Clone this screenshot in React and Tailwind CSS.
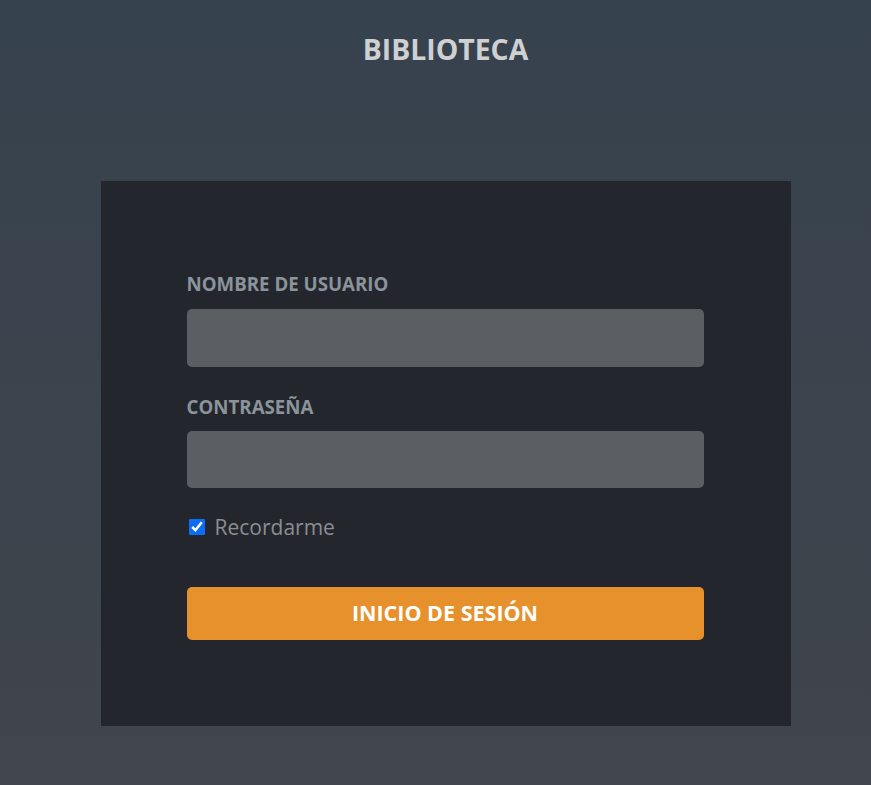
export default function App() {
  return (
    <div
      className="min-h-[785px] w-full bg-gradient-to-b from-[#36424e] to-[#41454c] flex flex-col items-center pl-[20px]"
      style={{ fontFamily: '"Open Sans", sans-serif' }}
    >
      <h1 className="mt-[30px] text-[28.4px] leading-[38px] font-bold text-[#cfd0d2]">
        BIBLIOTECA
      </h1>
      <div className="mt-[113px] w-[690px] h-[545px] bg-[#23272d] pt-[91px] pl-[86px] pr-[87px]">
        <label className="block text-[18.7px] leading-[24px] font-bold text-[#8b939b]">
          NOMBRE DE USUARIO
        </label>
        <input
          type="text"
          className="mt-[13px] block w-full h-[58px] rounded-[5px] bg-[#5b5e62] outline-none px-3 text-white"
        />
        <label className="block mt-[28px] text-[18.7px] leading-[24px] font-bold text-[#8b939b]">
          CONTRASEÑA
        </label>
        <input
          type="password"
          className="mt-[12px] block w-full h-[57px] rounded-[5px] bg-[#5b5e62] outline-none px-3 text-white"
        />
        <label className="mt-[25px] h-[28px] flex items-center gap-[10px]">
          <input type="checkbox" defaultChecked className="ml-[2px] w-[16px] h-[16px] accent-[#0b6cf5]" />
          <span className="text-[21px] leading-[28px] text-[#8b8e92]">Recordarme</span>
        </label>
        <button className="mt-[46px] w-full h-[53px] rounded-[5px] bg-[#e6912b] text-white text-[21.5px] font-bold">
          INICIO DE SESIÓN
        </button>
      </div>
    </div>
  );
}
